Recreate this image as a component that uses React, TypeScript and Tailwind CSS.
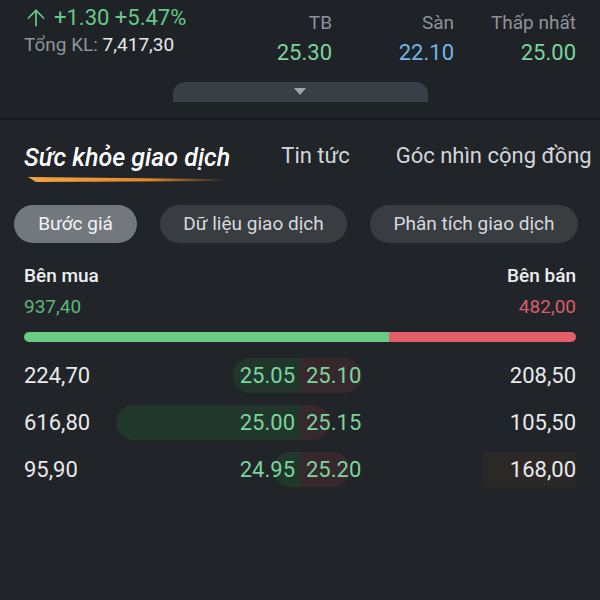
import React from 'react';
import { ArrowUp } from 'lucide-react';

interface Level {
  bidVol: string;
  bid: string;
  ask: string;
  askVol: string;
  bidW: number;
  askW: number;
  askVolBg?: boolean;
}

const LEVELS: Level[] = [
  { bidVol: '224,70', bid: '25.05', ask: '25.10', askVol: '208,50', bidW: 67, askW: 62 },
  { bidVol: '616,80', bid: '25.00', ask: '25.15', askVol: '105,50', bidW: 184, askW: 30 },
  { bidVol: '95,90', bid: '24.95', ask: '25.20', askVol: '168,00', bidW: 27, askW: 50, askVolBg: true },
];

const STATS = [
  { label: 'TB', value: '25.30', color: 'text-[#7ad49c]' },
  { label: 'Sàn', value: '22.10', color: 'text-[#72b6e4]' },
  { label: 'Thấp nhất', value: '25.00', color: 'text-[#7ad49c]' },
];

const PILLS = [
  { label: 'Bước giá', w: 'w-[123px]' },
  { label: 'Dữ liệu giao dịch', w: 'w-[187px]' },
  { label: 'Phân tích giao dịch', w: 'w-[208px]' },
];

export default function App() {
  return (
    <div className="w-[600px] h-[600px] overflow-hidden bg-[#212428] font-['Roboto',sans-serif]">
      {/* Quote header */}
      <div className="h-[120px] bg-[#1f2226] border-b-2 border-[#17191c] flex flex-col">
        <div className="flex justify-between px-6 pt-[5px]">
          <div>
            <div className="flex items-center gap-[5px] text-[22px] leading-[26px] text-[#66c987]">
              <ArrowUp size={26} strokeWidth={1.6} className="-ml-[1px] -my-[2px]" />
              <span>+1.30 +5.47%</span>
            </div>
            <div className="text-[19px] leading-[22px] mt-[3px] text-[#8e9399] whitespace-nowrap">
              Tổng KL: <span className="text-[#e6e8eb]">7,417,30</span>
            </div>
          </div>
          <div className="grid grid-cols-3 w-[366px]">
            {STATS.map((s) => (
              <div key={s.label} className="text-right">
                <div className="text-[19px] leading-[22px] mt-[7px] text-[#8e9399]">{s.label}</div>
                <div className={`text-[22px] leading-[26px] mt-[6px] ${s.color}`}>{s.value}</div>
              </div>
            ))}
          </div>
        </div>
        <div className="mt-auto mx-auto w-[255px] h-[20px] mb-[16px] rounded-t-[12px] bg-[#3a3f47] flex justify-center pt-[6px]">
          <svg width="12" height="8" viewBox="0 0 12 8">
            <polygon points="0,0 12,0 6,7" fill="#a0a5ad" />
          </svg>
        </div>
      </div>

      {/* Tabs */}
      <div className="flex items-end pl-6 pt-[23px] whitespace-nowrap">
        <div className="flex flex-col shrink-0">
          <span className="italic font-medium text-[25px] leading-[30px] text-white">Sức khỏe giao dịch</span>
          <svg width="200" height="8" viewBox="0 0 200 8" className="ml-[4px] mt-[3px]">
            <defs>
              <linearGradient id="ul" x1="0" x2="1" y1="0" y2="0">
                <stop offset="0" stopColor="#f5a443" />
                <stop offset="0.6" stopColor="#e08a2c" />
                <stop offset="1" stopColor="#e08a2c" stopOpacity="0" />
              </linearGradient>
            </defs>
            <polygon points="0,1 190,3 200,5 8,6" fill="url(#ul)" />
          </svg>
        </div>
        <span className="shrink-0 ml-[51px] text-[22px] leading-[26px] text-[#d3d6da] mb-[15px]">Tin tức</span>
        <span className="shrink-0 ml-[46px] text-[22px] leading-[26px] text-[#d3d6da] mb-[15px]">Góc nhìn cộng đồng</span>
      </div>

      {/* Sub tabs */}
      <div className="flex gap-[23px] px-[14px] mt-[21px]">
        {PILLS.map((p, i) => (
          <div
            key={p.label}
            className={
              i === 0
                ? `${p.w} h-[38px] rounded-full bg-[#73777e] text-[#f2f3f5] text-[19px] flex items-center justify-center`
                : `${p.w} h-[38px] rounded-full bg-[#393c41] text-[#d6d9dd] text-[19px] flex items-center justify-center`
            }
          >
            {p.label}
          </div>
        ))}
      </div>

      {/* Buy / sell summary */}
      <div className="px-6 mt-[22px]">
        <div className="flex justify-between text-[19px] leading-[22px] font-medium text-[#eceef0]">
          <span>Bên mua</span>
          <span>Bên bán</span>
        </div>
        <div className="flex justify-between text-[19px] leading-[22px] mt-[9px]">
          <span className="text-[#5db57a]">937,40</span>
          <span className="text-[#d65e6a]">482,00</span>
        </div>
        <div className="flex h-[10px] mt-[14px] rounded-full overflow-hidden">
          <div className="w-[365px] bg-[#6acb85]" />
          <div className="flex-1 bg-[#e35d6a]" />
        </div>

        {/* Order book */}
        <div className="mt-[10px]">
          {LEVELS.map((l) => (
            <div key={l.bid} className="h-[47px] grid grid-cols-[1fr_1fr] items-center text-[22px] text-[#e8eaed]">
              <div className="flex items-center h-[35px]">
                <span>{l.bidVol}</span>
                <div className="ml-auto relative h-full flex items-center pr-[5px]">
                  <div
                    className="absolute right-0 top-0 h-full rounded-l-full bg-[#22372c]"
                    style={{ width: l.bidW }}
                  />
                  <span className="relative text-[#7ad49c]">{l.bid}</span>
                </div>
              </div>
              <div className="flex items-center h-[35px]">
                <div className="relative h-full flex items-center pl-[6px]">
                  <div
                    className="absolute left-0 top-0 h-full rounded-r-full bg-[#37282d]"
                    style={{ width: l.askW }}
                  />
                  <span className="relative text-[#7ad49c]">{l.ask}</span>
                </div>
                <div className={l.askVolBg ? 'ml-auto h-full w-[93px] bg-[#2a2928] flex items-center justify-end' : 'ml-auto'}>
                  {l.askVol}
                </div>
              </div>
            </div>
          ))}
        </div>
      </div>
    </div>
  );
}
